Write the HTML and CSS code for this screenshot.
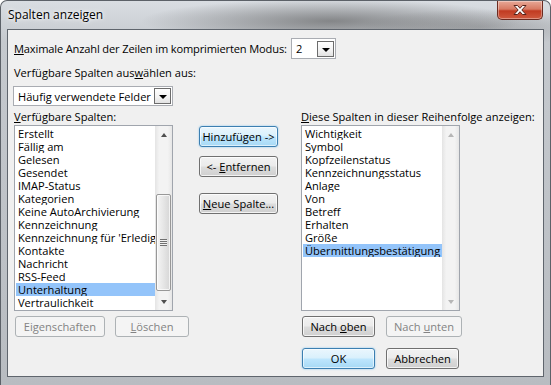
FILE: index.html
```html
<!DOCTYPE html>
<html lang="de">
<head>
  <meta charset="UTF-8" />
  <title>Spalten anzeigen</title>
  <link rel="stylesheet" href="styles.css">
</head>
<body>

  <div class="window">
    <div class="titlebar">
      <span class="title">Spalten anzeigen</span>
      <button class="close">
        <svg width="18" height="12" viewBox="0 0 18 12">
          <path d="M3 1.5h3.5l2.5 2.8 2.5-2.8H15l-4.2 4.5L15 10.5h-3.5L9 7.7l-2.5 2.8H3l4.2-4.5z" fill="#fff" stroke="#55221a" stroke-width="1"/>
        </svg>
      </button>
    </div>

    <div class="client">
      <div class="row-max">
        <label class="max-label"><u>M</u>aximale Anzahl der Zeilen im komprimierten Modus:</label>
        <div class="combo combo-small">
          <span class="combo-text">2</span>
          <span class="drop"><i class="tri"></i></span>
        </div>
      </div>

      <div class="line">Verfügbare Spalten aus<u>w</u>ählen aus:</div>
      <div class="combo combo-wide">
        <span class="combo-text">Häufig verwendete Felder</span>
        <span class="drop"><i class="tri"></i></span>
      </div>

      <div class="columns">
        <div class="col">
          <div class="col-label"><u>V</u>erfügbare Spalten:</div>
          <div class="listbox">
            <ul>
              <li>Erstellt</li>
              <li>Fällig am</li>
              <li>Gelesen</li>
              <li>Gesendet</li>
              <li>IMAP-Status</li>
              <li>Kategorien</li>
              <li>Keine AutoArchivierung</li>
              <li>Kennzeichnung</li>
              <li>Kennzeichnung für 'Erledigt'</li>
              <li>Kontakte</li>
              <li>Nachricht</li>
              <li>RSS-Feed</li>
              <li class="selected">Unterhaltung</li>
              <li>Vertraulichkeit</li>
            </ul>
            <div class="scrollbar">
              <div class="sb-btn"><i class="arrow up"></i></div>
              <div class="sb-track">
                <div class="thumb"><i class="grip"></i></div>
              </div>
              <div class="sb-btn"><i class="arrow down"></i></div>
            </div>
          </div>
          <div class="btn-row">
            <button class="btn w90" disabled>Ei<u>g</u>enschaften</button>
            <button class="btn w74" disabled><u>L</u>öschen</button>
          </div>
        </div>

        <div class="col middle">
          <button class="btn default">Hinzufügen -&gt;</button>
          <button class="btn">&lt;- <u>E</u>ntfernen</button>
          <button class="btn gap-big"><u>N</u>eue Spalte...</button>
        </div>

        <div class="col">
          <div class="col-label"><u>D</u>iese Spalten in dieser Reihenfolge anzeigen:</div>
          <div class="listbox">
            <ul>
              <li>Wichtigkeit</li>
              <li>Symbol</li>
              <li>Kopfzeilenstatus</li>
              <li>Kennzeichnungsstatus</li>
              <li>Anlage</li>
              <li>Von</li>
              <li>Betreff</li>
              <li>Erhalten</li>
              <li>Größe</li>
              <li class="selected">Übermittlungsbestätigung</li>
            </ul>
            <div class="scrollbar off">
              <div class="sb-btn"><i class="arrow up"></i></div>
              <div class="sb-track"></div>
              <div class="sb-btn"><i class="arrow down"></i></div>
            </div>
          </div>
          <div class="btn-row right">
            <button class="btn w73">Nach <u>o</u>ben</button>
            <button class="btn w76" disabled>Nach <u>u</u>nten</button>
          </div>
          <div class="btn-row right ok-row">
            <button class="btn w73 default">OK</button>
            <button class="btn w73">Abbrechen</button>
          </div>
        </div>
      </div>
    </div>
  </div>

</body>
</html>
```

FILE: styles.css
```css
* {
  box-sizing: border-box;
}

body {
  margin: 0;
  font-family: "Open Sans", "Noto Sans", sans-serif;
  font-size: 11.1px;
  color: #000;
}

ul {
  margin: 0;
  padding: 0;
  list-style: none;
}

/* window frame (aero glass) */
.window {
  width: 551px;
  height: 385px;
  display: flex;
  flex-direction: column;
  border: 1px solid #5c6168;
  border-bottom: none;
  border-radius: 7px 7px 0 0;
  overflow: hidden;
  background:
    radial-gradient(ellipse 190px 22px at 330px 20px, rgba(70,70,70,0.55), rgba(70,70,70,0) 100%),
    radial-gradient(ellipse 120px 18px at 480px 26px, rgba(90,90,90,0.35), rgba(90,90,90,0) 100%),
    linear-gradient(to bottom, #d9dde2, #c5c9ce 40px, #b8bcc1 100%);
}

.titlebar {
  height: 28px;
  display: flex;
  justify-content: space-between;
  align-items: flex-start;
  padding: 0 7px 0 7px;
  flex-shrink: 0;
}

.title {
  margin-top: 6px;
  font-size: 12px;
  line-height: 16px;
  text-shadow: 0 0 6px #fff, 0 0 3px #fff;
}

.close {
  width: 46px;
  height: 19px;
  padding: 0;
  border: 1px solid #6b2a20;
  border-top: none;
  border-radius: 0 0 5px 5px;
  background: linear-gradient(to bottom, #e7a897, #d77a63 45%, #c13b22 55%, #cf5a3f);
  box-shadow: inset 0 0 0 1px rgba(255,255,255,0.35);
  display: flex;
  align-items: center;
  justify-content: center;
}

.client {
  margin: 0 6px 0 6px;
  height: 348px;
  border: 1px solid #5f656d;
  background: #f0f0f0;
  padding: 8px 0 0 6px;
}

/* top rows */
.row-max {
  display: flex;
  align-items: center;
  height: 21px;
}

.max-label {
  width: 277px;
  white-space: nowrap;
  letter-spacing: -0.15px;
}

.line {
  margin-top: 6px;
  line-height: 16px;
}

.combo {
  display: flex;
  align-items: center;
  justify-content: space-between;
  background: #fff;
  border: 1px solid #a9acb2;
  padding: 0 1px 0 4px;
}

.combo-small {
  width: 45px;
  height: 21px;
}

.combo-wide {
  width: 160px;
  height: 20px;
  margin: 5px 0 0 -1px;
}

.combo-text {
  white-space: nowrap;
}

.drop {
  width: 17px;
  height: 16px;
  border: 1px solid #6c6c6c;
  background: linear-gradient(to bottom, #fff, #f2f2f2 60%, #e2e2e2);
  display: flex;
  align-items: center;
  justify-content: center;
  padding-top: 2px;
}

.tri {
  width: 0;
  height: 0;
  border-left: 4px solid transparent;
  border-right: 4px solid transparent;
  border-top: 4px solid #000;
}

/* three columns */
.columns {
  display: grid;
  grid-template-columns: 185px 102px 1fr;
}

.col-label {
  margin-top: 3px;
  line-height: 16px;
  height: 16px;
  white-space: nowrap;
}

.listbox {
  width: 159px;
  height: 186px;
  border: 1px solid #a0a5ad;
  background: #fff;
  display: flex;
}

.listbox ul {
  flex: 1;
  padding-top: 1px;
  overflow: hidden;
}

.listbox li {
  height: 13px;
  line-height: 13px;
  margin-left: 1px;
  padding-left: 2px;
  white-space: nowrap;
  overflow: hidden;
}

.listbox li.selected {
  background: #93c4fa;
}

.scrollbar {
  width: 17px;
  display: flex;
  flex-direction: column;
  background: linear-gradient(to right, #e4e4e4, #f3f3f3 25%, #f3f3f3 75%, #e6e6e6);
}

.sb-btn {
  height: 17px;
  display: flex;
  align-items: center;
  justify-content: center;
}

.sb-track {
  flex: 1;
  padding: 51px 1px 0 1px;
}

.arrow {
  width: 0;
  height: 0;
  border-left: 3.5px solid transparent;
  border-right: 3.5px solid transparent;
}

.arrow.up {
  border-bottom: 4px solid #4f4f4f;
}

.arrow.down {
  border-top: 4px solid #4f4f4f;
}

.off .arrow.up {
  border-bottom-color: #b6b6b6;
}

.off .arrow.down {
  border-top-color: #b6b6b6;
}

.thumb {
  height: 97px;
  border: 1px solid #989898;
  border-radius: 2px;
  background: linear-gradient(to right, #f5f5f5, #e6e6e6 50%, #d6d6d6);
  box-shadow: inset 0 0 0 1px rgba(255,255,255,0.7);
  display: flex;
  align-items: center;
  justify-content: center;
}

.grip {
  width: 7px;
  height: 7px;
  background: repeating-linear-gradient(to bottom, #707070 0 1px, #f0f0f0 1px 2px);
}

/* buttons */
.btn {
  height: 21px;
  padding: 0;
  font-family: inherit;
  font-size: inherit;
  color: #000;
  border: 1px solid #707070;
  border-radius: 3px;
  background: linear-gradient(to bottom, #f2f2f2, #ebebeb 48%, #dddddd 52%, #cfcfcf);
  box-shadow: inset 0 0 0 1px rgba(255,255,255,0.75);
  white-space: nowrap;
}

.btn.default {
  border-color: #3c7fb1;
  background: linear-gradient(to bottom, #eaf6fd, #d9f0fc 48%, #bee6fd 52%, #a7d9f5);
  box-shadow: inset 0 0 0 1px rgba(255,255,255,0.6), 0 0 2px #7dc3ef;
}

.btn:disabled {
  color: #838383;
  border-color: #adb2b5;
  background: #f4f4f4;
  box-shadow: none;
}

.btn-row {
  display: flex;
  gap: 10px;
  margin-top: 5px;
  padding-left: 1px;
}

.btn-row.right {
  gap: 11px;
}

.ok-row {
  margin-top: 11px;
}

.w90 { width: 90px; }
.w74 { width: 74px; }
.w73 { width: 73px; }
.w76 { width: 76px; }

.middle {
  display: flex;
  flex-direction: column;
  align-items: flex-start;
  padding-top: 20px;
}

.middle .btn {
  width: 79px;
  margin-bottom: 9px;
}

.middle .gap-big {
  margin-top: 7px;
}
```
